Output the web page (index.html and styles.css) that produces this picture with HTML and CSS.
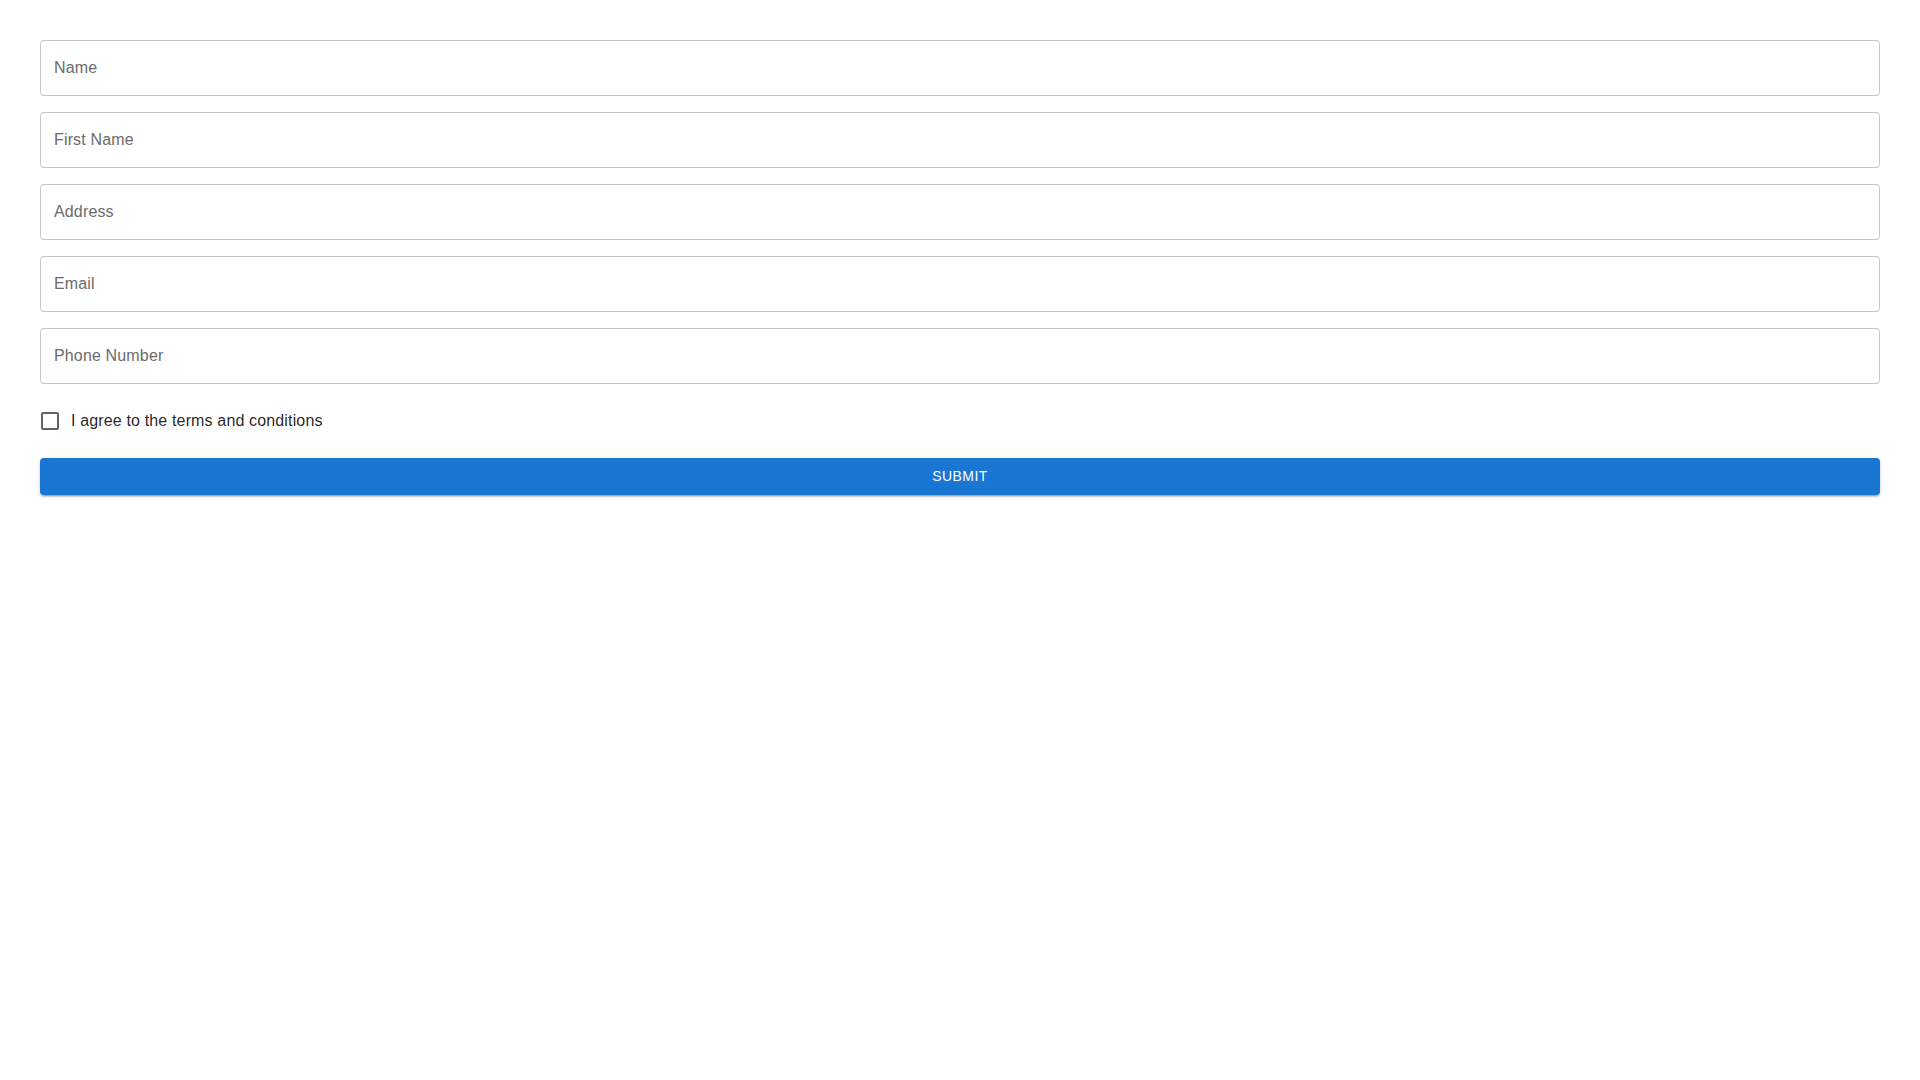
FILE: index.html
```html
<!DOCTYPE html>
<html>
<head>
<meta charset="utf-8">
<link rel="stylesheet" href="styles.css">
</head>
<body>
<form class="form">
  <div class="field"><input class="input" type="text" placeholder="Name"></div>
  <div class="field"><input class="input" type="text" placeholder="First Name"></div>
  <div class="field"><input class="input" type="text" placeholder="Address"></div>
  <div class="field"><input class="input" type="text" placeholder="Email"></div>
  <div class="field"><input class="input" type="text" placeholder="Phone Number"></div>
  <label class="check-row">
    <span class="check-box"></span>
    <span class="check-label">I agree to the terms and conditions</span>
  </label>
  <button class="submit" type="button">Submit</button>
</form>
</body>
</html>
```
FILE: styles.css
```css
html, body {
  margin: 0;
  padding: 0;
  background: #ffffff;
}
body {
  padding: 40px;
  font-family: "Liberation Sans", Arial, sans-serif;
}
.form {
  display: flex;
  flex-direction: column;
  gap: 16px;
}
.field {
  display: flex;
}
.input {
  flex: 1;
  box-sizing: border-box;
  height: 56px;
  border: 1px solid #c4c4c4;
  border-radius: 4px;
  padding: 0 13px;
  font-family: "Liberation Sans", Arial, sans-serif;
  font-size: 16px;
  letter-spacing: 0.15px;
  color: rgba(0,0,0,0.87);
  outline: none;
  background: #fff;
}
.input::placeholder {
  color: #6b6b6b;
  opacity: 1;
}
.check-row {
  display: flex;
  align-items: center;
  height: 42px;
  gap: 12px;
  cursor: pointer;
}
.check-box {
  box-sizing: border-box;
  width: 18px;
  height: 18px;
  margin-left: 1px;
  border: 2px solid #616161;
  border-radius: 2px;
}
.check-label {
  font-size: 16px;
  letter-spacing: 0.15px;
  color: rgba(0,0,0,0.87);
}
.submit {
  height: 37px;
  padding: 0 16px 1px;
  border: none;
  border-radius: 4px;
  background: #1976d2;
  color: #fff;
  font-family: "Liberation Sans", Arial, sans-serif;
  font-size: 14px;
  letter-spacing: 0.4px;
  text-transform: uppercase;
  box-shadow: 0 3px 1px -2px rgba(0,0,0,0.2), 0 2px 2px 0 rgba(0,0,0,0.14), 0 1px 5px 0 rgba(0,0,0,0.12);
  cursor: pointer;
}
```
